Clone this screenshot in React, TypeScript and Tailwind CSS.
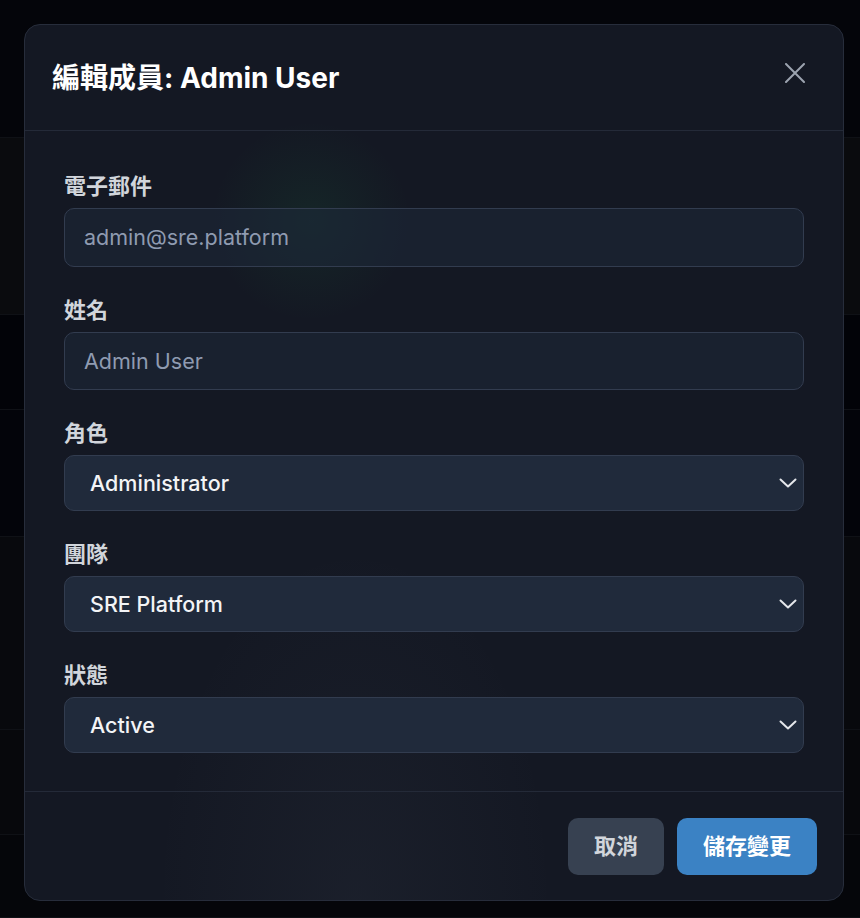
import React from 'react';

const bands = [
  { h: 'h-[138px]', bg: 'bg-[#04050a]' },
  { h: 'h-[177px]', bg: 'bg-[#0a0b0e]' },
  { h: 'h-[95px]', bg: 'bg-[#020308]' },
  { h: 'h-[127px]', bg: 'bg-[#03040a]' },
  { h: 'h-[193px]', bg: 'bg-[#08090d]' },
  { h: 'h-[105px]', bg: 'bg-[#07080c]' },
  { h: 'h-[83px]', bg: 'bg-[#05060a]' },
];

function Chevron() {
  return (
    <svg width="18" height="10" viewBox="0 0 18 10" fill="none" className="text-gray-200">
      <path d="M1.5 1.5L9 8.5L16.5 1.5" stroke="currentColor" strokeWidth="2" strokeLinecap="round" strokeLinejoin="round" />
    </svg>
  );
}

function Field({ label, children }: { label: string; children: React.ReactNode }) {
  return (
    <div>
      <div className="mb-[8px] text-[22px] leading-[28px] font-semibold text-[#d1d5db]">{label}</div>
      {children}
    </div>
  );
}

function ReadonlyInput({ value, tall }: { value: string; tall?: boolean }) {
  return (
    <div
      className={`flex ${tall ? 'h-[59px]' : 'h-[58px]'} items-center rounded-[10px] border border-[#323c4f] bg-[#1e293b]/50 pl-[19px] text-[21.5px] text-[#8f9bb1]`}
    >
      {value}
    </div>
  );
}

function Select({ value }: { value: string }) {
  return (
    <div className="flex h-[56px] items-center justify-between rounded-[10px] border border-[#323c4f] bg-[#202a3b] pl-[25px] pr-[6px] text-[21.5px] font-medium text-[#f3f4f6]">
      <span>{value}</span>
      <Chevron />
    </div>
  );
}

function App() {
  return (
    <div
      className="relative h-[918px] w-full overflow-hidden bg-[#04050a]"
      style={{ fontFamily: 'Inter, "Noto Sans CJK TC", sans-serif' }}
    >
      {/* dimmed table rows behind the modal */}
      <div className="flex flex-col">
        {bands.map((b, i) => (
          <div key={i} className={`${b.h} ${b.bg} border-b border-[#0f1116]`} />
        ))}
      </div>

      {/* Modal */}
      <div className="absolute left-6 top-6 w-[820px] rounded-2xl border border-[#272d3b] bg-[#141823] bg-[radial-gradient(circle_at_286px_196px,rgba(34,197,94,0.08),transparent_100px),radial-gradient(ellipse_at_330px_880px,rgba(148,163,184,0.05),transparent_200px)]">
        <div className="flex h-[106px] items-start justify-between border-b border-[#242a38] pl-[27px] pr-[38px] pt-[35px]">
          <h2 className="text-[28px] leading-[36px] font-bold text-white">編輯成員: Admin User</h2>
          <button className="mt-[3px] text-[#9ca3af]">
            <svg width="20" height="20" viewBox="0 0 20 20" fill="none">
              <path d="M1 1L19 19M19 1L1 19" stroke="currentColor" strokeWidth="2" strokeLinecap="round" />
            </svg>
          </button>
        </div>

        <div className="flex flex-col gap-[29px] px-[39px] pb-[38px] pt-[41px]">
          <Field label="電子郵件">
            <ReadonlyInput value="admin@sre.platform" tall />
          </Field>
          <Field label="姓名">
            <ReadonlyInput value="Admin User" />
          </Field>
          <Field label="角色">
            <Select value="Administrator" />
          </Field>
          <Field label="團隊">
            <Select value="SRE Platform" />
          </Field>
          <Field label="狀態">
            <Select value="Active" />
          </Field>
        </div>

        <div className="flex justify-end gap-[13px] border-t border-[#242a38] pb-[25px] pr-[26px] pt-[26px]">
          <button className="h-[57px] rounded-[10px] bg-[#374151] px-[26px] text-[22px] font-bold text-[#d1d5db]">取消</button>
          <button className="h-[57px] rounded-[10px] bg-[#3b82c4] px-[26px] text-[22px] font-bold text-white">儲存變更</button>
        </div>
      </div>
    </div>
  );
}

export default App;
